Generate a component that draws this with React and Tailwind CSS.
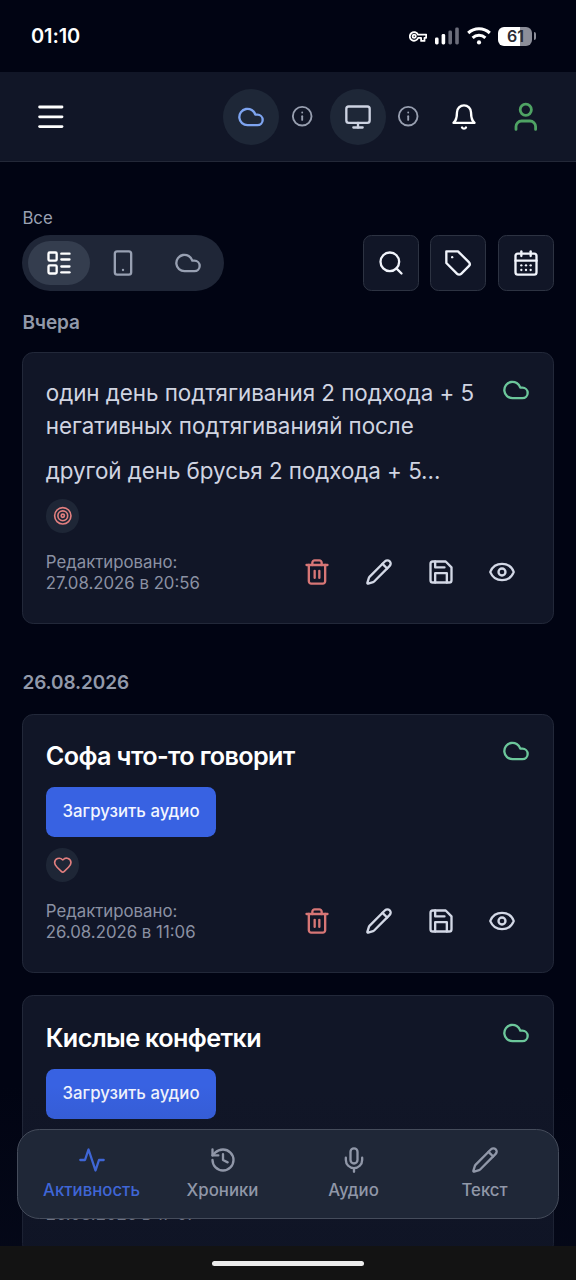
import React, { useState } from 'react';
import { CalendarDays, Cloud, Eye, Heart, History, Info, LayoutList, Menu, Monitor, Pencil, Search, Smartphone, Target, User } from 'lucide-react';

// Base for the outline icons that are drawn by hand
function Outline({ size = 28, className, children }) {
  return (
    <svg
      width={size}
      height={size}
      viewBox="0 0 24 24"
      fill="none"
      stroke="currentColor"
      strokeWidth={2}
      strokeLinecap="round"
      strokeLinejoin="round"
      className={className}
    >
      {children}
    </svg>
  );
}

const BellIcon = (props) => (
  <Outline {...props}>
    <path d="M6 8a6 6 0 0 1 12 0c0 7 3 9 3 9H3s3-2 3-9" />
    <path d="M10.3 21a1.94 1.94 0 0 0 3.4 0" />
  </Outline>
);

const TagIcon = (props) => (
  <Outline {...props}>
    <path d="M12 2H2v10l9.29 9.29c.94.94 2.48.94 3.42 0l6.58-6.58c.94-.94.94-2.48 0-3.42L12 2Z" />
    <path d="M7 7h.01" />
  </Outline>
);

const TrashIcon = (props) => (
  <Outline {...props}>
    <path d="M3 6h18" />
    <path d="M19 6v14c0 1-1 2-2 2H7c-1 0-2-1-2-2V6" />
    <path d="M8 6V4c0-1 1-2 2-2h4c1 0 2 1 2 2v2" />
    <path d="M10 11v6" />
    <path d="M14 11v6" />
  </Outline>
);

const SaveIcon = (props) => (
  <Outline {...props}>
    <path d="M19 21H5a2 2 0 0 1-2-2V5a2 2 0 0 1 2-2h11l5 5v11a2 2 0 0 1-2 2z" />
    <polyline points="17 21 17 13 7 13 7 21" />
    <polyline points="7 3 7 8 15 8" />
  </Outline>
);

const ActivityIcon = (props) => (
  <Outline {...props}>
    <path d="M22 12h-4l-3 9L9 3l-3 9H2" />
  </Outline>
);

const MicIcon = (props) => (
  <Outline {...props}>
    <path d="M12 2a3 3 0 0 0-3 3v7a3 3 0 0 0 6 0V5a3 3 0 0 0-3-3Z" />
    <path d="M19 10v2a7 7 0 0 1-14 0v-2" />
    <path d="M12 19v3" />
  </Outline>
);

function StatusBar() {
  return (
    <div className="flex h-[72px] shrink-0 items-center justify-between pl-[31px] pr-10">
      <span className="text-xl leading-6 font-semibold tracking-[-0.1px] text-white">01:10</span>
      <div className="flex items-center">
        {/* VPN key */}
        <svg width="18" height="12" viewBox="0 0 18 12" fill="none" stroke="white" strokeWidth="1.8" strokeLinejoin="round" className="mt-[2px]">
          <path d="M9 3.6h8.2v3.2h-1.7v3.1h-3.4V6.8H9.2A4.3 4.3 0 1 1 9 3.6Z" />
          <circle cx="5.2" cy="5.3" r="1.6" />
        </svg>
        <svg width="25" height="18" viewBox="0 0 25 18" className="ml-[8px]">
          <rect x="0" y="10.5" width="3.6" height="7" rx="1.4" fill="white" />
          <rect x="6.6" y="7" width="3.6" height="10.5" rx="1.4" fill="white" />
          <rect x="13.4" y="3.5" width="3.6" height="14" rx="1.4" fill="#6c6e7b" />
          <rect x="20.2" y="0.5" width="3.6" height="17" rx="1.4" fill="#6c6e7b" />
        </svg>
        <svg width="24" height="18" viewBox="0 0 24 18" fill="none" stroke="white" strokeWidth="3.1" className="ml-[7px]">
          <path d="M1.2 6a16 16 0 0 1 21.6 0" />
          <path d="M5.6 10.8a9.5 9.5 0 0 1 12.8 0" />
          <circle cx="12" cy="15.4" r="2.1" fill="white" stroke="none" />
        </svg>
        <div className="ml-[7px] flex h-[19px] w-[34px] items-center justify-center rounded-md bg-[linear-gradient(to_right,white_64%,#8c8e99_64%)]">
          <span className="pl-px text-[16px] leading-4 font-semibold text-[#2b2c33]">61</span>
        </div>
        <div className="ml-[2px] h-2 w-[2px] rounded-r-full bg-[#8c8e99]"></div>
      </div>
    </div>
  );
}

function Header() {
  return (
    <header className="flex h-[90px] shrink-0 items-center justify-between border-b border-[#232838] bg-[#111627] pr-[33.4px] pl-[33.8px]">
      <Menu className="text-white" size={33.6} />
      <div className="flex items-center">
        <div className="flex size-14 items-center justify-center rounded-full bg-[#1e2737]">
          <Cloud className="text-[#7ea4f0]" size={28} />
        </div>
        <Info className="mr-[16.8px] ml-[11.2px] text-[#989fb0]" size={22.4} />
        <div className="flex size-14 items-center justify-center rounded-full bg-[#1e2737]">
          <Monitor className="text-[#cdd3e2]" size={28} />
        </div>
        <Info className="mr-[30.8px] ml-[11.2px] text-[#989fb0]" size={22.4} />
        <BellIcon className="text-white" />
        <User className="ml-[30.8px] text-[#4fa364]" size={33.6} />
      </div>
    </header>
  );
}

const sources = [
  { id: 'all', icon: LayoutList },
  { id: 'device', icon: Smartphone },
  { id: 'cloud', icon: Cloud }
];

const tools = [
  { id: 'search', icon: Search },
  { id: 'tags', icon: TagIcon },
  { id: 'calendar', icon: CalendarDays }
];

function Toolbar() {
  const [source, setSource] = useState('all');

  return (
    <div className="flex items-center justify-between">
      <div className="flex h-14 items-center gap-[2.8px] rounded-full bg-[#1f2637] p-[5.6px]">
        {sources.map(({ id, icon: Icon }) => (
          <button
            key={id}
            onClick={() => setSource(id)}
            className={`flex h-[44.8px] w-[61.6px] items-center justify-center rounded-full ${source === id ? 'bg-[#343d4e] text-white' : 'text-[#98a0b2]'}`}
          >
            <Icon size={28} />
          </button>
        ))}
      </div>
      <div className="flex gap-[11.2px]">
        {tools.map(({ id, icon: Icon }) => (
          <button key={id} className="flex size-14 items-center justify-center rounded-[8.4px] border border-[#2d3342] bg-[#111627] text-[#f1f4fb]">
            <Icon size={28} />
          </button>
        ))}
      </div>
    </div>
  );
}

function NoteCard({ title, paragraphs, tag: Tag, edited }) {
  return (
    <article className="rounded-[11.2px] border border-[#222839] bg-[#111627] px-[22.4px] pt-[22.4px] pb-[29px]">
      <div className="flex items-start justify-between">
        <div>
          {title && <h3 className="pt-[2px] text-[25.2px] leading-[35px] font-semibold tracking-[-0.63px] text-white">{title}</h3>}
          {paragraphs && (
            <div className="w-[440px] space-y-[11.2px] text-[22.4px] leading-[33.6px] tracking-[-0.05px] text-[#d0d4e1]">
              {paragraphs.map((text) => (
                <p key={text}>{text}</p>
              ))}
            </div>
          )}
        </div>
        <Cloud className="shrink-0 text-[#6cc79b]" size={28} />
      </div>
      {title && (
        <button className="mt-[13px] flex h-[50px] w-[170.5px] items-center justify-center rounded-[8.4px] bg-[#3862e2] text-[16.8px] font-medium text-[#f3f6ff]">
          Загрузить аудио
        </button>
      )}
      <div className="mt-[11.2px] flex size-[33.6px] items-center justify-center rounded-full bg-[#1e2636]">
        <Tag className="text-[#e27f7f]" size={19.6} />
      </div>
      <div className="mt-[18.6px] flex items-center justify-between">
        <p className="pt-px text-[16.8px] leading-[21px] text-[#8b91a3]">
          Редактировано:
          <br />
          {edited}
        </p>
        <div className="mr-[14px] flex gap-[33.6px] pb-[2px] text-[#d3d8e6]">
          <TrashIcon className="text-[#d77676]" />
          <Pencil size={28} />
          <SaveIcon />
          <Eye size={28} />
        </div>
      </div>
    </article>
  );
}

const tabs = [
  { label: 'Активность', icon: ActivityIcon, active: true },
  { label: 'Хроники', icon: History },
  { label: 'Аудио', icon: MicIcon },
  { label: 'Текст', icon: Pencil }
];

function TabBar() {
  return (
    <nav className="absolute inset-x-[17px] top-[1129px] grid h-[90px] grid-cols-4 rounded-[22.4px] border border-[#454c5b] bg-[#1f2737] px-[8px]">
      {tabs.map(({ label, icon: Icon, active }) => (
        <button
          key={label}
          className={`flex flex-col items-center pt-[15.5px] text-[16.8px] leading-[22px] font-medium ${active ? 'text-[#3f66d6]' : 'text-[#9097a8]'}`}
        >
          <Icon size={28} />
          <span className="mt-[5px]">{label}</span>
        </button>
      ))}
    </nav>
  );
}

function App() {
  return (
    <div className="relative flex h-[1280px] w-[576px] flex-col overflow-hidden bg-[#010413] font-['Inter',sans-serif]">
      <StatusBar />
      <Header />

      <main className="min-h-0 flex-1 overflow-hidden px-[22.4px] pt-[45px]">
        <p className="mb-[6px] text-[16.8px] leading-[22px] text-[#9ba1b2]">Все</p>
        <Toolbar />

        <h2 className="mt-[17.6px] text-[19px] leading-7 font-semibold tracking-[-0.1px] text-[#9299aa]">Вчера</h2>
        <div className="mt-[15.8px]">
          <NoteCard
            paragraphs={['один день подтягивания 2 подхода + 5 негативных подтягиванияй после', 'другой день брусья 2 подхода + 5...']}
            tag={Target}
            edited="27.08.2026 в 20:56"
          />
        </div>

        <h2 className="mt-[45px] text-[19px] leading-7 font-semibold tracking-[-0.1px] text-[#9299aa]">26.08.2026</h2>
        <div className="mt-[16.4px] space-y-[22.2px]">
          <NoteCard title="Софа что-то говорит" tag={Heart} edited="26.08.2026 в 11:06" />
          <NoteCard title="Кислые конфетки" tag={Heart} edited="26.08.2026 в 17:07" />
        </div>
      </main>

      {/* Fade under the tab bar */}
      <div className="pointer-events-none absolute inset-x-0 top-[1085px] h-[161px] bg-gradient-to-b from-transparent to-[#0c1122]/30"></div>
      <TabBar />

      {/* Gesture bar */}
      <div className="flex h-[34px] shrink-0 items-center justify-center bg-[#131313]">
        <div className="h-[5px] w-[152px] rounded-full bg-[#ececec]"></div>
      </div>
    </div>
  );
}

export default App;
